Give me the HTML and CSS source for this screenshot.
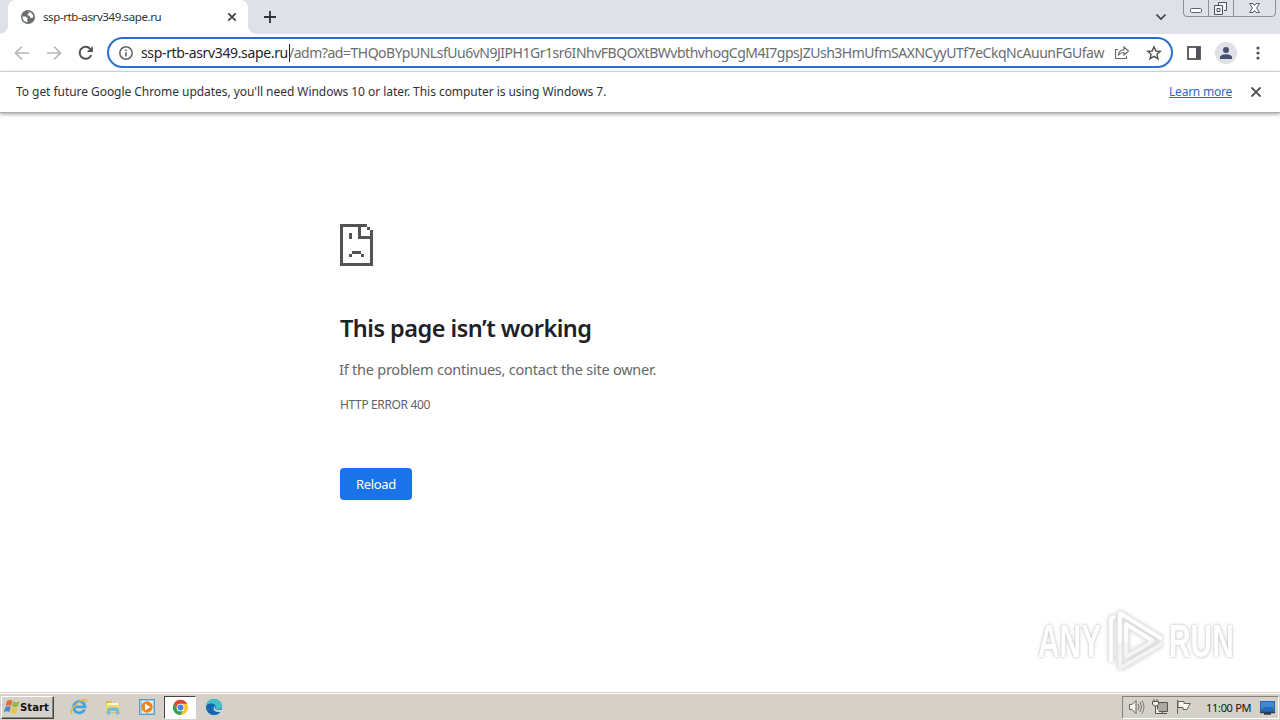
FILE: index.html
```html
<!DOCTYPE html>
<html lang="en">
<head>
<meta charset="utf-8">
<title>ssp-rtb-asrv349.sape.ru</title>
<link rel="stylesheet" href="styles.css">
</head>
<body>
<div class="screen">
  <header class="tabstrip">
    <div class="tab">
      <svg class="globe" width="14" height="14" viewBox="0 0 14 14"><circle cx="7" cy="7" r="7" fill="#6b6e72"/><path d="M1.500 6.500 4.500 6.500 7 8.200 6 9.500 6.800 12.400 3.400 11.200 1.600 8.800ZM6.300 1.500 8.600 1.600 8.400 2.900 6.600 3.800 6.600 5 8.800 6.300 9.500 8 11.500 7.800 12.400 6.500 11.600 4.200 10 2.400" fill="#fff"/></svg>
      <span class="tab-title">ssp-rtb-asrv349.sape.ru</span>
      <svg class="tab-close" width="10" height="10" viewBox="0 0 10 10"><path d="M1.300 1.300 8.700 8.700M8.700 1.300 1.300 8.700" stroke="#3c4043" stroke-width="1.700"/></svg>
    </div>
    <svg class="new-tab" width="12" height="12" viewBox="0 0 12 12"><path d="M6 0V12M0 6H12" stroke="#303338" stroke-width="1.800"/></svg>
    <svg class="tab-search" width="12" height="8" viewBox="0 0 12 8"><path d="M1.500 1.500 6 6 10.500 1.500" fill="none" stroke="#3c4043" stroke-width="1.700"/></svg>
    <svg class="window-buttons" width="94" height="17" viewBox="0 0 94 17"><path d="M.5 0V13Q.5 16.500 4 16.500H89Q92.500 16.500 92.500 13V0M25.500 0V16M50.500 0V16" fill="none" stroke="#8b909c"/><rect x="7.500" y="8.500" width="11" height="4" rx="1" fill="#fff" stroke="#5c6270"/><path d="M35.500 5V2.500H43.500V10.500H41M31.500 5.500H39.500V14.500H31.500ZM34 8.500H37V11.500H34Z" fill="#f3f5f8" stroke="#4b505c"/><path d="M66.500 3.500H70L71.500 5.500 73 3.500H76.500L73.500 8 76.500 12.500H73L71.500 10.500 70 12.500H66.500L69.500 8Z" fill="#fff" stroke="#5c6270"/></svg>
  </header>
  <div class="toolbar">
    <svg class="back" width="16" height="16" viewBox="0 0 16 16"><path d="M15 8H2M8 1.500 1.500 8 8 14.500" fill="none" stroke="#b4b6b9" stroke-width="1.700"/></svg>
    <svg class="forward" width="16" height="16" viewBox="0 0 16 16"><path d="M1 8H14M8 1.500 14.500 8 8 14.500" fill="none" stroke="#b4b6b9" stroke-width="1.700"/></svg>
    <svg class="refresh" width="16" height="16" viewBox="0 0 16 16"><path d="M13.300 10A6 6 0 1 1 12.200 3.800L14 5.600" fill="none" stroke="#505357" stroke-width="2"/><path d="M14.800 1V7H8.800Z" fill="#505357"/></svg>
    <div class="omnibox">
      <svg class="info" width="14" height="14" viewBox="0 0 14 14"><circle cx="7" cy="7" r="6.200" fill="none" stroke="#5f6368" stroke-width="1.500"/><path d="M7 6.200V10.400M7 3.400V4.900" stroke="#5f6368" stroke-width="1.600"/></svg>
      <span class="url-host">ssp-rtb-asrv349.sape.ru</span><span class="caret"></span><span class="url-path">/adm?ad=THQoBYpUNLsfUu6vN9JIPH1Gr1sr6INhvFBQOXtBWvbthvhogCgM4I7gpsJZUsh3HmUfmSAXNCyyUTf7eCkqNcAuunFGUfaw</span>
      <svg class="share" width="16" height="15" viewBox="0 0 16 15"><path d="M4 4.500H1.500V13.500H12.500V11M4.500 10C5 6.500 7 5 10 4.800V2L14.500 6 10 10V7.500C7.500 7.500 6 8.300 4.500 10Z" fill="none" stroke="#62656a" stroke-width="1.100"/></svg>
      <svg class="star" width="16" height="16" viewBox="0 0 16 16"><path d="M8 1.800 9.900 6 14.300 6.300 10.900 9.200 12 13.700 8 11.300 4 13.700 5.100 9.200 1.700 6.300 6.100 6Z" fill="none" stroke="#505357" stroke-width="1.400"/></svg>
    </div>
    <svg class="side-panel" width="14" height="14" viewBox="0 0 14 14"><rect x="1" y="1" width="12" height="12" fill="#fff" stroke="#505357" stroke-width="1.800"/><path d="M9 1H13V13H9Z" fill="#505357"/></svg>
    <svg class="avatar" width="22" height="22" viewBox="0 0 22 22"><circle cx="11" cy="11" r="11" fill="#dfe1e6"/><circle cx="11" cy="8" r="3" fill="#46506c"/><path d="M5 17V15.500C5 13 9 12.300 11 12.300S17 13 17 15.500V17Z" fill="#46506c"/></svg>
    <svg class="menu" width="4" height="14" viewBox="0 0 4 14"><g fill="#505357"><circle cx="2" cy="2" r="1.600"/><circle cx="2" cy="7" r="1.600"/><circle cx="2" cy="12" r="1.600"/></g></svg>
  </div>
  <div class="infobar">
    <span class="notice">To get future Google Chrome updates, you'll need Windows 10 or later. This computer is using Windows 7.</span>
    <a class="learn-more">Learn more</a>
    <svg class="info-close" width="12" height="12" viewBox="0 0 12 12"><path d="M1.500 1.500 10.500 10.500M10.500 1.500 1.500 10.500" stroke="#505357" stroke-width="1.800"/></svg>
  </div>
  <main class="page">
    <svg class="sad-page" width="33" height="42" viewBox="0 0 11 14" shape-rendering="crispEdges"><path d="M0 0H9V1H7V4H10V2H11V14H0ZM1 1V13H10V5H6V1ZM9 1H10V2H9ZM3 3H4V5H3ZM4 9H7V10H4ZM3 10H4V11H3ZM7 10H8V11H7Z" fill="#535353" fill-rule="evenodd"/></svg>
    <h1 class="heading">This page isn’t working</h1>
    <p class="message">If the problem continues, contact the site owner.</p>
    <div class="code">HTTP ERROR 400</div>
    <button class="reload">Reload</button>
  </main>
  <footer class="taskbar">
    <div class="start">
      <svg width="17" height="16" viewBox="0 0 17 16"><path d="M3 2Q6 0 8.500 2L7 7Q4.500 5.500 1.500 7Z" fill="#e66a37"/><path d="M9.300 2.400Q12 4 15.500 2.300L14 7.500Q11 9 8 7.300Z" fill="#8dbb45"/><path d="M1.300 8Q4.500 6.500 6.800 8L5.300 13Q3 11.500 0 13Z" fill="#4b88ca"/><path d="M7.700 8.400Q10.500 10 13.700 8.500L12.200 13.600Q9 15 6.200 13.300Z" fill="#f1c33d"/></svg>
      <span class="start-label">Start</span>
    </div>
    <svg class="task-icon ie" width="18" height="18" viewBox="0 0 18 18"><path d="M14.500 11.500A5.700 5.700 0 1 1 15 8.800H5" fill="none" stroke="#44a5dc" stroke-width="2.800"/><path d="M2 16C-1 13 5 6 11 2.800 15 .7 18 1 16 5" fill="none" stroke="#dfb749" stroke-width="1.500"/></svg>
    <svg class="task-icon explorer" width="18" height="18" viewBox="0 0 18 18"><path d="M2 3H7L8.500 5H16V15H2Z" fill="#dcb951"/><path d="M3 5H15V10H3Z" fill="#fff6c6"/><path d="M2 7H16V14H2Z" fill="#f0d67b"/><path d="M3 16.500V12Q3 9.500 6 9.500H12Q15 9.500 15 12V16.500H12V13H6V16.500Z" fill="#77b9da"/></svg>
    <svg class="task-icon player" width="18" height="18" viewBox="0 0 18 18"><rect x="1.500" y="1.500" width="15" height="15" fill="#9dcbe6" stroke="#6396bd"/><rect x="4" y="3" width="11" height="12" fill="#e1f1f8"/><circle cx="9" cy="9" r="5.700" fill="#ee861d"/><path d="M7 5.500 12.300 9 7 12.500Z" fill="#fff"/></svg>
    <div class="active-task">
      <svg width="17" height="17" viewBox="0 0 18 18"><circle cx="9" cy="9" r="8" fill="#f7c52b"/><path d="M2 5A8 8 0 0 1 16 5H9L6 11Z" fill="#dc4638"/><path d="M2 5A8 8 0 0 0 9 17L12 11H6Z" fill="#36a05a"/><circle cx="9" cy="9" r="4.100" fill="#fff"/><circle cx="9" cy="9" r="3.200" fill="#4781e4"/></svg>
    </div>
    <svg class="task-icon edge" width="18" height="18" viewBox="0 0 18 18"><circle cx="9" cy="9" r="8" fill="#1679c5"/><path d="M1 9C1-1 15-1 17 7 17.500 11 14 12 11 11 9.500 10 12 9 10 7 7 4 2 6 1 9Z" fill="#43c0c4"/><path d="M1 9C3 4 9 5 10.500 8 8 7 6 9 7 11 8 14 12 15 16 13 13 18 7 18 4 15 2 13 1 11 1 9Z" fill="#1665ad"/><path d="M10.500 8C9 10 10 11.500 12 11.800L17 12V14L13 14C9 14 7 10 10.500 8Z" fill="#d5d1c9"/></svg>
    <div class="tray">
      <svg class="tray-icon" width="17" height="16" viewBox="0 0 17 16"><path d="M1.500 5.500H4L8 1.500V14.500L4 10.500H1.500Z" fill="#f5f4ef" stroke="#65635e"/><path d="M10 5Q12 8 10 11M12 3Q15 8 12 13M14 1.500Q18 8 14 14.500" fill="none" stroke="#77746e"/></svg>
      <svg class="tray-icon network" width="17" height="16" viewBox="0 0 17 16"><path d="M5.500 3.500H15.500V12.500H5.500ZM6 14.500H15M10.500 12V15" fill="#aaa79f" stroke="#55534f"/><path d="M2 0V3M5 0V3M.5 2.500H6.500V5Q6 7 3.500 7T.5 5ZM3.500 7V14.500H8" fill="#f6f4ed" stroke="#55534f"/></svg>
      <svg class="tray-icon flag" width="16" height="16" viewBox="0 0 16 16"><path d="M1.500 1V15M2 2.500H8V4.500H14.500L12.500 7.500 11 10.500H7V8.500H2Z" fill="#f9f8f3" stroke="#65635e"/></svg>
      <span class="clock">11:00 PM</span>
      <svg class="desktop" width="17" height="15" viewBox="0 0 17 15"><path d="M1 1H16V12H1Z" fill="#2469b9"/><path d="M2 2H15V8Q8 5 2 9Z" fill="#4287d2"/><path d="M1 12.500H16M5 14H12" stroke="#303d50" stroke-width="1.500"/></svg>
    </div>
  </footer>
  <div class="watermark">
    <span class="mark-any">ANY</span>
    <svg width="60" height="66" viewBox="0 0 60 66"><g fill="none" stroke-linejoin="round"><path d="M5 54V11L9 8M14 60V5L56 31M15 60 56 36M20 49V16L47 33 20 49" stroke="#e8e8e8" stroke-width="5.500"/><path d="M5 54V11L9 8M14 35V5L56 31M20 35V16L47 33" stroke="#fff" stroke-width="3.500"/><path d="M14 35V60L56 36M20 35V49L47 33" stroke="#f5f5f5" stroke-width="3"/></g></svg>
    <span class="mark-run">RUN</span>
  </div>
</div>
</body>
</html>
```
FILE: styles.css
```css
* { box-sizing: border-box; }
body { margin: 0; background: #fff; font-family: "Noto Sans", sans-serif; color: #303236; }
svg { display: block; flex: none; }
.screen { position: relative; width: 1280px; height: 720px; overflow: hidden; display: flex; flex-direction: column; }
.tabstrip { height: 34px; flex: none; padding-left: 8px; background: #dee1e8; display: flex; align-items: center; }
.tab { position: relative; width: 240px; height: 34px; border-radius: 8px 8px 0 0; background: #fff; display: flex; align-items: center; padding: 0 11px 0 13px; }
.tab::before, .tab::after { content: ""; position: absolute; bottom: 0; width: 8px; height: 8px; }
.tab::before { left: -8px; background: radial-gradient(circle at 0 0, #dee1e8 7.5px, #fff 8px); }
.tab::after { right: -8px; background: radial-gradient(circle at 100% 0, #dee1e8 7.5px, #fff 8px); }
.tab-title { margin-left: 8px; font-size: 11.5px; white-space: nowrap; line-height: 34px; letter-spacing: -.39px; }
.tab-close { margin-left: auto; }
.new-tab { margin-left: 16px; }
.tab-search { margin-left: auto; }
.window-buttons { align-self: flex-start; margin: 0 3px 0 16px; }
.toolbar { height: 38px; flex: none; display: flex; align-items: center; border-bottom: 1px solid #dcdee2; padding: 0 20px 0 14px; }
.forward, .refresh { margin-left: 16px; }
.omnibox { width: 1066px; height: 31px; margin-left: 13px; border: 2px solid #2a6fcf; border-radius: 16px; display: flex; align-items: center; padding: 0 9px 0 10px; white-space: nowrap; font-size: 14px; }
.url-host { width: 148px; margin-left: 8px; color: #222427; letter-spacing: -.35px; }
.caret { width: 1px; height: 18px; margin-right: -1px; background: #222; }
.url-path { width: 816px; color: #6a6d71; letter-spacing: -.48px; }
.share { margin-left: 9px; }
.star { margin-left: auto; }
.side-panel { margin-left: 14px; }
.avatar { margin-left: 14px; }
.menu { margin-left: 19px; }
.infobar { height: 41px; flex: none; display: flex; align-items: center; padding: 0 18px 1px 16px; font-size: 12px; border-bottom: 1px solid #aaacae; box-shadow: 0 1px 4px #999; }
.notice { white-space: nowrap; letter-spacing: -.05px; }
.learn-more { margin-left: auto; color: #286bc6; text-decoration: underline; white-space: nowrap; letter-spacing: -.23px; }
.info-close { margin-left: 18px; }
.page { flex: 1; padding: 111px 0 0 340px; }
.heading { margin: 45px 0 0; font: 600 23.5px/34px "Noto Sans", sans-serif; letter-spacing: -.52px; color: #202124; white-space: nowrap; }
.message { margin: 13px 0 0 -1px; font-size: 14.5px; line-height: 22px; letter-spacing: -.23px; color: #66686b; white-space: nowrap; }
.code { margin-top: 15px; font-size: 12px; line-height: 20px; letter-spacing: -.36px; color: #5f6368; white-space: nowrap; }
.reload { display: block; width: 72px; height: 32px; margin-top: 53px; padding: 0; border: 0; border-radius: 4px; background: #1a73e8; color: #fff; font: 13px "Noto Sans", sans-serif; letter-spacing: -.3px; }
.taskbar { height: 28px; flex: none; background: #d5d1c9; border-top: 1px solid #d5d1c9; box-shadow: inset 0 1px #fff; display: flex; align-items: center; padding: 1px 1px 0 1px; }
.start { width: 53px; height: 23px; display: flex; align-items: center; padding-left: 2px; border: 1px solid; border-color: #fff #444 #444 #fff; box-shadow: inset -1px -1px #8b8983; }
.start-label { font: bold 11.3px "DejaVu Sans Condensed", "DejaVu Sans", sans-serif; color: #111; margin-left: -1px; }
.ie { margin-left: 16px; }
.explorer, .player { margin-left: 16px; }
.active-task { width: 32px; height: 23px; margin-left: 8px; display: grid; place-items: center; background: #fff; border: 1px solid; border-color: #444 #fff #fff #444; }
.edge { margin-left: 9px; }
.tray { width: 157px; height: 23px; margin-left: auto; border: 1px solid; border-color: #85827c #fff #fff #85827c; display: flex; align-items: center; padding-left: 5px; }
.network, .flag { margin-left: 7px; }
.clock { width: 46px; margin-left: 14px; font-size: 11px; color: #111; white-space: nowrap; letter-spacing: -.3px; }
.desktop { margin-left: 7px; }
.watermark { position: absolute; left: 1038px; top: 607px; width: 196px; height: 68px; display: flex; align-items: center; font: bold 46px "Liberation Sans", sans-serif; color: #fff; text-shadow: 0 0 4px #bbb, 0 0 2px #ddd; }
.mark-any, .mark-run { width: 65px; transform: scaleX(.65); transform-origin: 0 50%; white-space: nowrap; flex: none; }
.watermark svg { margin: 0 3px; filter: drop-shadow(0 0 2px #ccc); }
```
